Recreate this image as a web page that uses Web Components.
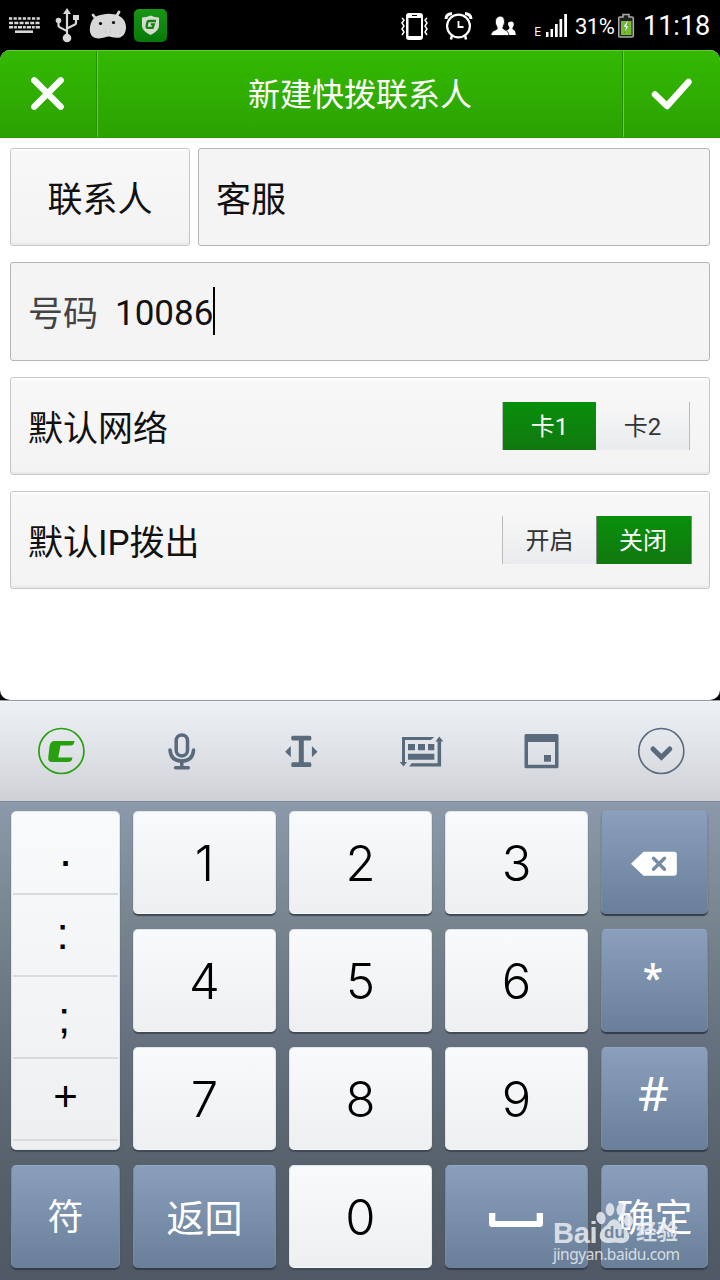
<!DOCTYPE html>
<html lang="zh-CN">
<head>
<meta charset="utf-8">
<title>新建快拨联系人</title>
<style>
    body {
        margin: 0;
        width: 720px;
        height: 1280px;
        overflow: hidden;
        background: #000;
        font-family: Roboto, "Noto Sans CJK SC", sans-serif;
    }
</style>
</head>
<body>
<dial-screen>
    <dial-status slot="status"></dial-status>
    <dial-header slot="header">新建快拨联系人</dial-header>
    <dial-form slot="form"></dial-form>
    <dial-keyboard slot="keyboard"></dial-keyboard>
</dial-screen>

<script>
// every icon is drawn in screen coordinates: [x, y, width, height, markup]
const icons = {
    keyboard: [8, 16, 33, 18, `<g stroke="#d8d8d8" fill="none">
        <path d="M9 18.5h31" stroke-width="2.6" stroke-dasharray="3.2 1.4"/>
        <path d="M9 23h31" stroke-width="2.4" stroke-dasharray="4 1.3"/>
        <path d="M9 27.3h31" stroke-width="2.6" stroke-dasharray="4.2 .9 2.8 1"/>
        <path d="M15 31.7h18" stroke-width="2.6"/></g>`],
    usb: [54, 7, 26, 36, `<g fill="#d8d8d8"><path d="M63 14l4-6 4 6z"/><circle cx="67" cy="38" r="4.3"/><circle cx="58.5" cy="20.5" r="2.8"/><path d="M73 15h6v5h-6z"/></g>
        <path d="M67 12v25M58.5 21v4.5q0 1 1 1.6l7.5 4M76 19v4q0 1-1 1.500l-8 4" fill="none" stroke="#d8d8d8" stroke-width="2.2"/>`],
    android: [88, 10, 40, 30, `<path d="M97 20l-4-5M116 17l3-5" stroke="#d8d8d8" stroke-width="2.8" stroke-linecap="round"/>
        <path fill="#d8d8d8" d="M90 27c1-7 5-12 13-12.500q5-1.500 11-.3c7 1 12 6 12 13 0 7-4 10.600-9 10.600-4 0-6-1-8-1.200-3 .2-6 2-11 1.800-6-.5-9-4.400-8-11.400z"/>
        <circle cx="100.500" cy="23.500" r="1.600"/><circle cx="113.500" cy="22.500" r="1.600"/><path d="M105 29h1M110 29h1M105 32h1M110 32h1" stroke="#bbb"/>`],
    guard: [134, 9, 33, 33, `<defs><linearGradient id="g" x2="0" y2="1"><stop stop-color="#179616"/><stop offset="1" stop-color="#087908"/></linearGradient></defs>
        <rect x="134" y="9" width="33" height="33" rx="5" fill="url(#g)"/>
        <path fill="#d5dccd" d="M150.500 15.500q4 2 8.500 2v9q-1 5-8.500 8.500-7.500-3.500-8.500-8.500v-9q4.500 0 8.500-2z"/>
        <path d="M156 21h-7q-1.300 0-1.600 1.300l-.8 4q-.3 1.500 1 1.500h5l1.200-3.500h-3" fill="none" stroke="#178316" stroke-width="2.300"/>`],
    vibrate: [400, 11, 30, 30, `<path fill="#fff" d="M409 13h11q3 0 3 3v21q0 3-3 3h-11q-3 0-3-3V16q0-3 3-3zM408.500 18v18h12.500V18zM412 15v1h5v-1z" fill-rule="evenodd"/>
        <path d="M402 18l2 2-2 3 2 3-2 3 2 3-2 3M427 18l-2 2 2 3-2 3 2 3-2 3 2 3" fill="none" stroke="#fff" stroke-width="1.500"/>`],
    alarm: [444, 11, 30, 30, `<g fill="none" stroke="#fff"><circle cx="458.500" cy="26" r="11.400" stroke-width="2.200"/><path d="M446 19q0-5 6-5.500M471 19q0-5-6-5.500" stroke-width="3"/><path d="M458.500 21v6h5" stroke-width="1.800"/><path d="M452 35l-1 4.500M465 35l1 4.500" stroke-width="2.500"/></g>`],
    people: [490, 14, 28, 22, `<g fill="#fff"><path d="M506 34v-4q2-1 3-2 .8-1 0-2.500-2-3 0-4.500 3-1.500 4.500.8 1 2-.7 4.500-.8 1.500.3 2.300 2.500 1 2.700 5.400z"/><path stroke="#000" stroke-width=".8" d="M491 34.500q-.5-4 5.500-6 1.500-1 .3-2.700-2.500-3.500-1-8 4-5 8-1 2 4.500-.5 8.500-1.300 2 .5 3 5.500 2 5 6.200z"/></g>`],
    signal: [546, 12, 22, 25, `<path fill="#fff" d="M546 31h2.500v5H546zM550.500 28h2.500v8h-2.500zM555 23h2.700v13H555zM559.500 18h2.700v18h-2.700zM564.200 13h2.800v23h-2.800z"/>`],
    battery: [618, 13, 17, 26, `<path d="M623 14.500h6v2.500h3q1.300 0 1.300 1.300v17.400q0 1.300-1.300 1.300h-12q-1.300 0-1.300-1.300V18.300q0-1.300 1.300-1.300h3z" fill="#222" stroke="#a8aaa6" stroke-width="1.600"/><path fill="#72bf2e" d="M621 21h10.500v14H621z"/><path fill="#fff" stroke="#4d6938" stroke-width=".5" d="M627 21l-4 6h2.500l-1 6 4.500-7h-2.500l2-5z"/>`],
    close: [30, 76, 36, 36, `<path d="M34.300 80.300l26.400 26.400M60.700 80.300l-26.400 26.400" stroke="#fff" stroke-width="6.400" stroke-linecap="round"/>`],
    check: [651, 76, 42, 36, `<path d="M655 94.500l12 11.500 21.500-24" fill="none" stroke="#fff" stroke-width="6.400" stroke-linecap="round" stroke-linejoin="round"/>`],
    logo: [37, 727, 48, 48, `<circle cx="61.400" cy="751" r="22.500" fill="none" stroke="#27a00f" stroke-width="1.700"/><path fill="#27a00f" d="M54.800 741H74.500q-.5 4.600-4 4.600H60.500l-2.300 11.800h14.300q-.7 4.600-4.500 4.600H52q-4 0-3.800-4l1.400-12q.8-5 5.200-5z"/>`],
    mic: [166, 731, 30, 40, `<g fill="none" stroke="#596a7d" stroke-width="3.500" stroke-linecap="round"><rect x="176.200" y="734.900" width="11.300" height="21" rx="5.600"/><path d="M170 750q1 11 11.800 11t11.800-11M181.800 761v6M175.500 767.800h12.800"/></g>`],
    cursor: [284, 734, 34, 34, `<g fill="#596a7d"><rect x="291.300" y="735.700" width="20" height="4.800" rx="1.500"/><rect x="291.300" y="762.200" width="20" height="4.800" rx="1.500"/><path d="M298.800 738h5v26h-5zM285.200 751.700l5.600-5.800v11.400zM317.500 751.700l-5.600-5.800v11.400z"/></g>`],
    swap: [399, 734, 45, 34, `<g fill="#596a7d"><path d="M402 737h32.300l-3.500 3H405v22h2l-3.500 4.500-3.700-4.500h2.200zM439.300 736.500l4 5h-2.200v25h-32l2.500-3.200h26V741.500h-2.200z"/><path d="M408 744h7v6.200h-7zM418 744h7v6.200h-7zM428 744h6.300v6.200H428zM408 753.800h26.300v6H408z"/></g>`],
    panel: [523, 732, 36, 38, `<path fill="#596a7d" fill-rule="evenodd" d="M526 734h31q1.500 0 1.500 1.500v31.300q0 1.500-1.500 1.500h-31q-1.500 0-1.500-1.500v-31.300q0-1.500 1.500-1.500zM528 742v22.700h27V742z"/><path fill="#596a7d" d="M544 755h7v6.700h-7z"/>`],
    hide: [637, 727, 49, 48, `<g fill="none" stroke="#596a7d"><circle cx="661.300" cy="751" r="22.500" stroke-width="1.600"/><path d="M653 749l8.400 8.200 8.400-8.200" stroke-width="5" stroke-linecap="round"/></g>`],
    backspace: [630, 851, 48, 26, `<path fill="#fff" d="M643.500 851.700H674q2.800 0 2.800 2.800V873q0 2.800-2.800 2.800h-30.500l-12.500-12z"/><path d="M653.500 858.200l11 11M664.500 858.200l-11 11" stroke="#768ba6" stroke-width="3.400" stroke-linecap="round"/>`],
    space: [488, 1213, 56, 17, `<path fill="#fff" d="M489 1214h6.300v8h41.400v-8h6.300v10.800q0 3.200-3.200 3.200h-47.600q-3.200 0-3.200-3.200z"/>`],
    paw: [595, 1202, 40, 42, `<g fill="#e6eaef"><ellipse cx="601" cy="1218" rx="4.600" ry="6.200" transform="rotate(-12 601 1218)"/><ellipse cx="610" cy="1209.500" rx="4.300" ry="6.500"/><ellipse cx="621" cy="1209.500" rx="4.500" ry="6.500" transform="rotate(8 621 1209.500)"/><ellipse cx="628.500" cy="1221" rx="4.500" ry="6"/><path d="M600 1238q-1.500-6 4-10.500 3.500-2.500 5.500-6 5.500-4.500 9.500.5 2 3.500 5.500 6 6 5 4.500 10.500-3 5.500-9 4.500-5-1-10.500 0-7.500.5-9.500-5z"/></g>`]
};

customElements.define('dial-icon', class extends HTMLElement {
    constructor() {
        super();
        let [x, y, w, h, art] = icons[this.getAttribute('name')];
        let shadow = this.attachShadow({mode: 'open'});
        shadow.innerHTML = `<style>:host { display: block; flex: none; } svg { display: block; }</style>
            <svg width="${w}" height="${h}" viewBox="${x} ${y} ${w} ${h}">${art}</svg>`;
    }
});

// registers an element which only stamps its template
function define(name, html) {
    const template = document.createElement('template');
    template.innerHTML = html;
    customElements.define(name, class extends HTMLElement {
        constructor() {
            super();
            let shadow = this.attachShadow({mode: 'open'});
            shadow.appendChild(template.content.cloneNode(true));
        }
    });
}

define('dial-status', `
    <style>
    :host {
        display: flex;
        align-items: center;
        height: 50px;
        box-sizing: border-box;
        padding: 0 10px 0 8px;
        color: #fff;
    }
    .left, .right {
        display: flex;
        align-items: center;
    }
    .left { gap: 8px; }
    .left :first-child { margin-right: 5px; }
    .left :last-child { margin-left: -2px; }
    .right { margin-left: auto; padding-top: 1px; }
    span { line-height: 30px; white-space: nowrap; }
    .net { font: 13px/14px "Open Sans", sans-serif; width: 9px; margin: 10px 3px 0 16px; }
    .pct { font-size: 22px; margin: 2px 4px 0 7px; width: 39px; letter-spacing: -.5px; }
    .time { font-size: 27px; width: 67px; margin-left: 8px; margin-top: 1px; }
    </style>
    <div class="left">
        <dial-icon name="keyboard"></dial-icon>
        <dial-icon name="usb"></dial-icon>
        <dial-icon name="android"></dial-icon>
        <dial-icon name="guard"></dial-icon>
    </div>
    <div class="right">
        <dial-icon name="vibrate"></dial-icon>
        <dial-icon name="alarm" style="margin: 0 16px 0 14px"></dial-icon>
        <dial-icon name="people"></dial-icon>
        <span class="net">E</span>
        <dial-icon name="signal"></dial-icon>
        <span class="pct">31%</span>
        <dial-icon name="battery"></dial-icon>
        <span class="time">11:18</span>
    </div>
`);

define('dial-header', `
    <style>
    :host {
        display: grid;
        grid-template-columns: 96px 1fr 97px;
        height: 88px;
        box-sizing: border-box;
        background: linear-gradient(#34b902, #2ba202);
        border-top: 1px solid #5ccb35;
        border-bottom: 1px solid #289702;
        color: #fff;
        font-size: 32px;
        line-height: 32px;
    }
    div {
        display: flex;
        align-items: center;
        justify-content: center;
    }
    .title {
        border: solid #249000;
        border-width: 0 1px;
        box-shadow: inset 1px 0 #68ca45, 1px 0 #68ca45;
        padding: 2px 0 0 1px;
    }
    </style>
    <div class="close"><dial-icon name="close"></dial-icon></div>
    <div class="title"><slot></slot></div>
    <div class="done"><dial-icon name="check"></dial-icon></div>
`);

define('dial-box', `
    <style>
    :host {
        display: flex;
        align-items: center;
        height: 98px;
        box-sizing: border-box;
        padding: 8px 17px 0 17px;
        border: 1px solid #b5b5b5;
        border-radius: 3px;
        background: #f4f4f4;
        font-size: 35px;
        line-height: 40px;
        color: #111;
    }
    :host([raised]) {
        border-color: #c9c9c9;
        background: linear-gradient(#f8f8f8, #f3f3f3);
        box-shadow: inset 0 2px #fff, inset 0 -2px 1px #e9e9e9;
    }
    </style>
    <slot></slot>
`);

define('dial-switch', `
    <style>
    :host {
        display: grid;
        grid-template-columns: 93px 93px;
        height: 48px;
        margin: -8px 0 0 auto;
        font-size: 24px;
        line-height: 46px;
        text-align: center;
        color: #333;
        background: linear-gradient(#f7f7f7, #e9ebee);
        border: solid #bbb;
        border-width: 0 1px;
        --on: linear-gradient(#08900a, #11780f);
    }
    div {
        box-sizing: border-box;
        height: 48px;
        padding-top: 2px;
    }
    :host([value="left"]) .a, :host([value="right"]) .b {
        background: var(--on);
        color: #fff;
    }
    :host([value="right"]) {
        grid-template-columns: 93px 95px;
        border-right-color: #6d9c6c;
    }
    :host([value="right"]) .b { border-left: 1px solid #888; padding-right: 2px; }
    </style>
    <div class="a"><slot name="a"></slot></div>
    <div class="b"><slot name="b"></slot></div>
`);

define('dial-form', `
    <style>
    :host {
        display: flex;
        flex-direction: column;
        gap: 16px;
        padding: 10px;
    }
    .person {
        display: grid;
        grid-template-columns: 180px 1fr;
        gap: 8px;
    }
    .pick { justify-content: center; }
    .number { height: 99px; padding-top: 0; }
    .label { color: #444; margin-right: 17px; padding-top: 6px; }
    .value { font-size: 35px; padding-top: 4px; }
    .caret { width: 2px; height: 48px; background: #000; margin-top: -1px; }
    </style>
    <div class="person">
        <dial-box raised class="pick">联系人</dial-box>
        <dial-box>客服</dial-box>
    </div>
    <dial-box class="number"><span class="label">号码</span><span class="value">10086</span><i class="caret"></i></dial-box>
    <dial-box raised>默认网络
        <dial-switch value="left" style="margin-right: 2px"><span slot="a">卡1</span><span slot="b">卡2</span></dial-switch>
    </dial-box>
    <dial-box raised>默认IP拨出
        <dial-switch value="right"><span slot="a">开启</span><span slot="b">关闭</span></dial-switch>
    </dial-box>
`);

define('dial-key', `
    <style>
    :host {
        display: flex;
        align-items: center;
        justify-content: center;
        box-sizing: border-box;
        border-radius: 5px;
        background: linear-gradient(#f8fafc, #eeeff1);
        border: 1px solid #dfe5ec;
        border-bottom-color: #f4f8fc;
        box-shadow: 0 2px 1px #414b56;
        font: 300 49px/60px Inter, "Noto Sans CJK SC", sans-serif;
        color: #000;
        min-width: 0;
        padding-top: 2px;
        white-space: nowrap;
    }
    :host([blue]) {
        background: linear-gradient(#899fbc, #6a7f99);
        border-color: #8fa6c5 #778ba6 #6d809a;
        box-shadow: 0 2px 1px #333c48;
        color: #fff;
        font: 36px/60px "Liberation Sans", "Noto Sans CJK SC", sans-serif;
    }
    </style>
    <slot></slot>
`);

define('dial-symbols', `
    <style>
    :host {
        grid-row: span 3;
        display: grid;
        grid-template-rows: repeat(4, 82px);
        box-sizing: border-box;
        border: 1px solid #dfe5ec;
        border-radius: 5px;
        background: linear-gradient(#f9fafc, #eeeff1);
        box-shadow: 0 2px 1px #414b56;
        font: 47px/80px "Liberation Sans", sans-serif;
        text-align: center;
        padding: 1px 1px 0;
    }
    div {
        border-bottom: 2px solid #d8dadd;
        box-sizing: border-box;
    }
    span { display: block; }
    </style>
    <div><span style="margin-top: -3px">.</span></div>
    <div><span style="margin: -1px 6px 0 0; font-size: 44px">:</span></div>
    <div><span style="margin: 1px 3px 0 0; font-size: 44px">;</span></div>
    <div><span style="font-size: 42px; margin-top: -2px">+</span></div>
`);

define('dial-watermark', `
    <style>
    :host {
        position: absolute;
        left: 553px;
        top: 1202px;
        width: 134px;
        color: #e6eaef;
        opacity: .87;
        font-family: "Liberation Sans", "Noto Sans CJK SC", sans-serif;
    }
    .brand { display: flex; height: 42px; align-items: flex-end; }
    .bai { font-size: 29px; line-height: 28px; font-weight: bold; width: 42px; letter-spacing: -.3px; margin-bottom: -3px; }
    .paw { position: relative; }
    .du { position: absolute; left: 9px; top: 20px; font: bold 17px/22px "Liberation Sans"; color: #7186a2; }
    .cn { font-size: 21px; line-height: 30px; font-weight: bold; margin: 0 0 -3px 1px; }
    .url { font: 15.500px/18px "Noto Sans", sans-serif; letter-spacing: -.45px; padding-top: 1px; }
    </style>
    <div class="brand">
        <span class="bai">Bai</span>
        <span class="paw"><dial-icon name="paw"></dial-icon><span class="du">du</span></span>
        <span class="cn">经验</span>
    </div>
    <div class="url">jingyan.baidu.com</div>
`);

define('dial-keyboard', `
    <style>
    :host {
        display: flex;
        flex-direction: column;
        height: 580px;
    }
    .tools {
        display: grid;
        grid-template-columns: repeat(6, 120px);
        justify-items: center;
        align-items: center;
        height: 101px;
        box-sizing: border-box;
        padding: 0 0 0 1px;
        border-top: 1px solid #8f99a5;
        background: linear-gradient(#edf1f6, #dfe2e7 50%, #cfd1d5);
        box-shadow: inset 0 1px #f5f8fc;
    }
    .keys {
        flex: 1;
        display: grid;
        grid-template-columns: 109px 143px 143px 143px 107px;
        grid-template-rows: repeat(4, 103px);
        gap: 15px 13px;
        padding: 9px 12px 0 11px;
        border-top: 1px solid #7e8997;
        background: linear-gradient(#8c99ab, #77858f 25%, #65717e 50%, #56616b 77%, #4f5864);
    }
    .star { padding: 0 3px 5px 0; font: 600 37px/50px "Open Sans", sans-serif; }
    .hash { padding: 0 2px 11px 0; font: 48px/60px "Noto Sans", sans-serif; }
    .cn { padding-bottom: 0; }
    </style>
    <div class="tools">
        <dial-icon name="logo"></dial-icon>
        <dial-icon name="mic"></dial-icon>
        <dial-icon name="cursor"></dial-icon>
        <dial-icon name="swap"></dial-icon>
        <dial-icon name="panel"></dial-icon>
        <dial-icon name="hide"></dial-icon>
    </div>
    <div class="keys">
        <dial-symbols></dial-symbols>
        <dial-key>1</dial-key>
        <dial-key>2</dial-key>
        <dial-key>3</dial-key>
        <dial-key blue style="padding: 2px 2px 0 0"><dial-icon name="backspace"></dial-icon></dial-key>
        <dial-key>4</dial-key>
        <dial-key>5</dial-key>
        <dial-key>6</dial-key>
        <dial-key blue class="star">*</dial-key>
        <dial-key>7</dial-key>
        <dial-key>8</dial-key>
        <dial-key>9</dial-key>
        <dial-key blue class="hash">#</dial-key>
        <dial-key blue class="cn">符</dial-key>
        <dial-key blue style="font-size: 38px; padding-top: 4px">返回</dial-key>
        <dial-key>0</dial-key>
        <dial-key blue style="padding: 8px 2px 0 0"><dial-icon name="space"></dial-icon></dial-key>
        <dial-key blue class="cn" style="font-size: 38px; padding: 2px 0 0 0">确定</dial-key>
    </div>
    <dial-watermark></dial-watermark>
`);

define('dial-screen', `
    <style>
    :host {
        display: flex;
        flex-direction: column;
        width: 720px;
        height: 1280px;
        position: relative;
    }
    .page {
        height: 650px;
        overflow: hidden;
        border-radius: 10px;
        background: #fff;
    }
    </style>
    <slot name="status"></slot>
    <div class="page">
        <slot name="header"></slot>
        <slot name="form"></slot>
    </div>
    <slot name="keyboard"></slot>
`);
</script>
</body>
</html>
